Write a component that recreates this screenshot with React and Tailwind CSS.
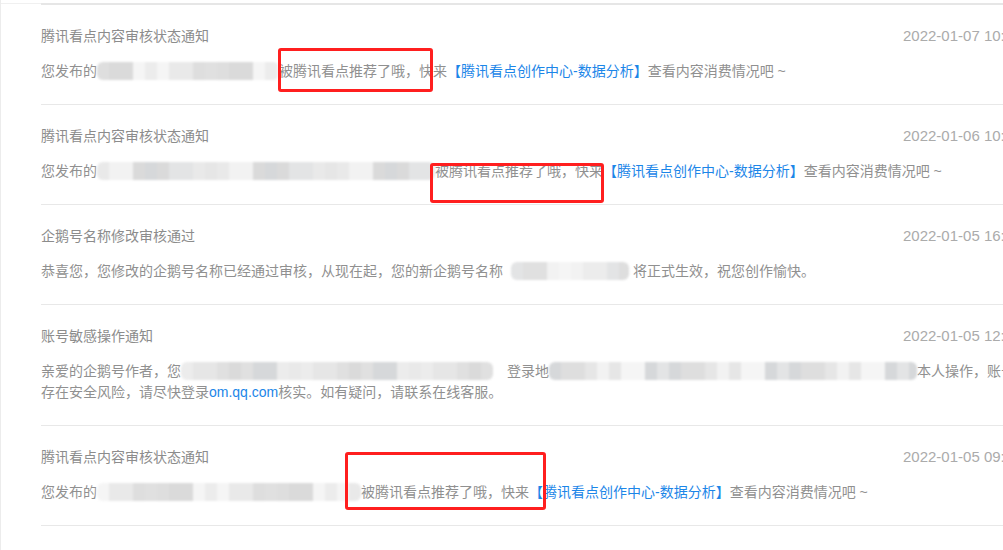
import React from "react";

const FONT = { fontFamily: '"Liberation Sans", "Noto Sans CJK SC", sans-serif' };

const SHADES = ["#e6e6e6", "#dadada", "#ececec", "#dedede", "#f2f2f2", "#d6d8da", "#e9e9e9", "#e0e0e0", "#f5f5f5", "#e3e4e5"];

// pixelated mosaic that stands in for the blurred-out text
function Mosaic({ width, seed = 0 }) {
  const count = Math.ceil(width / 12);
  return (
    <span
      className="inline-flex align-middle h-[18px] -mt-[2px] rounded-[6px] overflow-hidden blur-[0.8px]"
      style={{ width }}
    >
      {Array.from({ length: count }).map((_, i) => (
        <span
          key={i}
          className="h-full w-[12px] shrink-0"
          style={{ background: SHADES[(i * 7 + seed * 3 + ((i * i) % 5)) % SHADES.length] }}
        />
      ))}
    </span>
  );
}

const Link = ({ children }) => <span className="text-[#1c86e8]">{children}</span>;

function Item({ title, date, children }) {
  return (
    <div className="border-b border-[#e8e8e8] pt-[21px] pb-[22px]">
      <div className="flex items-center h-5">
        <div className="flex-1 text-[14px] leading-5 text-[#8c8c8c]">{title}</div>
        <div className="w-[130px] shrink-0 whitespace-nowrap text-[15px] leading-5 text-[#ababab]">{date}</div>
      </div>
      <div className="mt-[15px] text-[14px] leading-[21px] text-[#909090] whitespace-nowrap">{children}</div>
    </div>
  );
}

const Recommend = ({ blur, seed }) => (
  <>
    您发布的
    <Mosaic width={blur} seed={seed} />
    被腾讯看点推荐了哦，快来<Link>【腾讯看点创作中心-数据分析】</Link>查看内容消费情况吧 ~
  </>
);

export default function App() {
  return (
    <div className="relative w-[1003px] h-[550px] overflow-hidden bg-white border-l border-[#ececec]" style={FONT}>
      {/* top edge */}
      <div className="flex mt-[3px]">
        <div className="w-[40px] h-[2px] border-t border-[#f0f0f0]" />
        <div className="flex-1 h-[2px] bg-[#e6e6e6]" />
      </div>

      <div className="ml-[40px] w-[992px]">
        <Item title="腾讯看点内容审核状态通知" date="2022-01-07 10:32">
          <Recommend blur={182} seed={1} />
        </Item>
        <Item title="腾讯看点内容审核状态通知" date="2022-01-06 10:18">
          <Recommend blur={338} seed={2} />
        </Item>
        <Item title="企鹅号名称修改审核通过" date="2022-01-05 16:27">
          恭喜您，您修改的企鹅号名称已经通过审核，从现在起，您的新企鹅号名称
          <span className="inline-block w-[8px]" />
          <Mosaic width={118} seed={3} />
          <span className="inline-block w-[4px]" />
          将正式生效，祝您创作愉快。
        </Item>
        <Item title="账号敏感操作通知" date="2022-01-05 12:40">
          <div>
            亲爱的企鹅号作者，您
            <Mosaic width={312} seed={4} />
            <span className="inline-block w-[14px]" />
            登录地
            <Mosaic width={368} seed={5} />
            本人操作，账号
          </div>
          <div>
            存在安全风险，请尽快登录<Link>om.qq.com</Link>核实。如有疑问，请联系在线客服。
          </div>
        </Item>
        <Item title="腾讯看点内容审核状态通知" date="2022-01-05 09:51">
          <Recommend blur={264} seed={6} />
        </Item>
      </div>

      {/* red annotation boxes */}
      <div className="absolute left-[277px] top-[48px] w-[155px] h-[44px] border-[3px] border-[#ff1f1f] rounded-[3px]" />
      <div className="absolute left-[429px] top-[163px] w-[174px] h-[40px] border-[3px] border-[#ff1f1f] rounded-[3px]" />
      <div className="absolute left-[344px] top-[452px] w-[201px] h-[58px] border-[3px] border-[#ff1f1f] rounded-[3px]" />
    </div>
  );
}
